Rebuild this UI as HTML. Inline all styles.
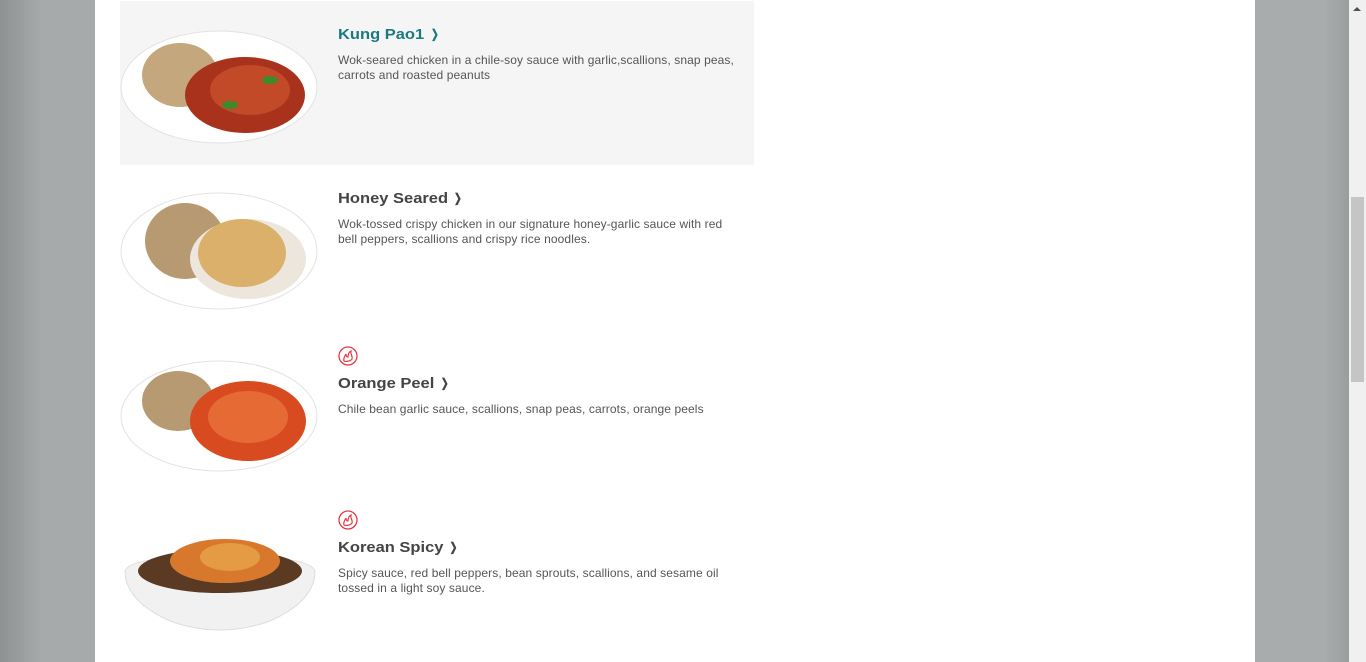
<!DOCTYPE html>
<html><head><meta charset="utf-8"><style>
*{margin:0;padding:0;box-sizing:border-box}
html,body{width:1366px;height:662px;overflow:hidden}
body{background:linear-gradient(90deg,#8d9192 0%,#a7aaaa 3%,#a9acac 50%,#a9acac 97%,#8f9393 100%);font-family:"Liberation Sans",Arial,sans-serif;position:relative}
#main{position:absolute;left:95px;top:0;width:1160px;height:662px;background:#fff}
.sb{position:absolute;left:1349px;top:0;width:17px;height:662px;background:#f0f0f0}
.thumb{position:absolute;left:1351px;top:197px;width:13px;height:185px;background:#c5c5c5}
.arr{position:absolute;left:1353px;top:7px;width:0;height:0;border-left:4px solid transparent;border-right:4px solid transparent;border-bottom:4px solid #505050}
.item{position:absolute;left:120px;width:634px;height:164px}
.item svg.plate{position:absolute;left:0;top:20px}
.t{position:absolute;left:218px;font-weight:bold;font-size:15px;letter-spacing:0;color:#444;transform:scaleX(1.1);transform-origin:left;white-space:nowrap}
.t b{display:inline-block;font-size:12px;transform:scaleX(.7);vertical-align:1px}
.t.k{color:#1a7a80}
.d{position:absolute;left:218px;width:398px;font-size:12px;letter-spacing:.1px;line-height:15px;color:#555}
.fire{position:absolute;left:218px;width:20px;height:20px}
</style></head><body>
<div id="main"></div>
<div class="item" style="top:1px;background:#f5f5f5">
<svg class="plate" width="200" height="130" viewBox="0 0 200 130" style="top:24px"><ellipse cx="99" cy="62" rx="98" ry="56" fill="#fff" stroke="#e2e2e2"/><ellipse cx="60" cy="50" rx="38" ry="32" fill="#c4a77c"/><ellipse cx="125" cy="70" rx="60" ry="38" fill="#a8321c"/><ellipse cx="130" cy="65" rx="40" ry="25" fill="#c24a28"/><ellipse cx="110" cy="80" rx="8" ry="4" fill="#3e8a2a"/><ellipse cx="150" cy="55" rx="8" ry="4" fill="#3e8a2a"/></svg>
<div class="t k" style="top:25px">Kung Pao1 <b>❯</b></div>
<div class="d" style="top:52px">Wok-seared chicken in a chile-soy sauce with garlic,scallions, snap peas, carrots and roasted peanuts</div>
</div>
<div class="item" style="top:165px">
<svg class="plate" width="200" height="130" viewBox="0 0 200 130" style="top:24px"><ellipse cx="99" cy="62" rx="98" ry="58" fill="#fff" stroke="#e2e2e2"/><ellipse cx="65" cy="52" rx="40" ry="38" fill="#b89a72"/><ellipse cx="128" cy="70" rx="58" ry="40" fill="#ece6dc"/><ellipse cx="122" cy="64" rx="44" ry="34" fill="#dab06a"/></svg>
<div class="t" style="top:25px">Honey Seared <b>❯</b></div>
<div class="d" style="top:52px">Wok-tossed crispy chicken in our signature honey-garlic sauce with red bell peppers, scallions and crispy rice noodles.</div>
</div>
<div class="item" style="top:339px">
<svg class="fire" style="top:7px" viewBox="0 0 20 20"><circle cx="10" cy="10" r="9" fill="none" stroke="#e03a45" stroke-width="1.3"/><path d="M6 15c-1-3 1-5 2-7 0 2 1 3 2 3 0-3 1-5 3-6-1 3 2 5 1 8-1 2-6 3-8 2z" fill="none" stroke="#e03a45" stroke-width="1.2"/></svg>
<svg class="plate" width="200" height="120" viewBox="0 0 200 120" style="top:20px"><ellipse cx="99" cy="57" rx="98" ry="55" fill="#fff" stroke="#e2e2e2"/><ellipse cx="58" cy="42" rx="36" ry="30" fill="#b89a72"/><ellipse cx="128" cy="62" rx="58" ry="40" fill="#d84b20"/><ellipse cx="128" cy="58" rx="40" ry="26" fill="#e56a34"/></svg>
<div class="t" style="top:36px">Orange Peel <b>❯</b></div>
<div class="d" style="top:63px">Chile bean garlic sauce, scallions, snap peas, carrots, orange peels</div>
</div>
<div class="item" style="top:503px">
<svg class="fire" style="top:7px" viewBox="0 0 20 20"><circle cx="10" cy="10" r="9" fill="none" stroke="#e03a45" stroke-width="1.3"/><path d="M6 15c-1-3 1-5 2-7 0 2 1 3 2 3 0-3 1-5 3-6-1 3 2 5 1 8-1 2-6 3-8 2z" fill="none" stroke="#e03a45" stroke-width="1.2"/></svg>
<svg class="plate" width="200" height="120" viewBox="0 0 200 120" style="top:28px"><path d="M5 40 Q10 25 100 25 Q190 25 195 40 Q195 70 150 90 Q100 108 50 90 Q5 70 5 40z" fill="#f1f1f1" stroke="#ddd"/><ellipse cx="100" cy="40" rx="82" ry="22" fill="#5a3a22"/><ellipse cx="105" cy="30" rx="55" ry="22" fill="#d8782c"/><ellipse cx="110" cy="26" rx="30" ry="14" fill="#e59a44"/></svg>
<div class="t" style="top:36px">Korean Spicy <b>❯</b></div>
<div class="d" style="top:63px">Spicy sauce, red bell peppers, bean sprouts, scallions, and sesame oil tossed in a light soy sauce.</div>
</div>
<div class="sb"></div><div class="arr"></div><div class="thumb"></div>
</body></html>
